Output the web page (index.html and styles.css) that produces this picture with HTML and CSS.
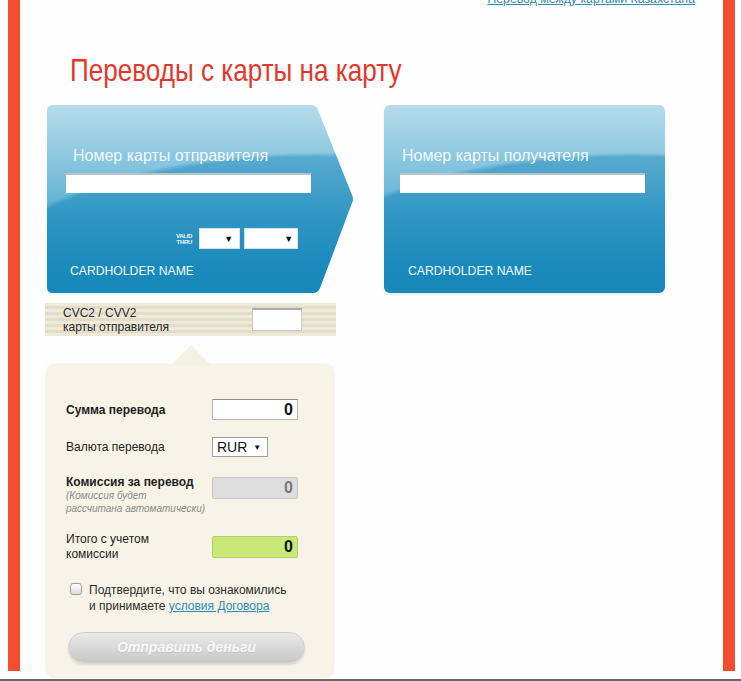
FILE: index.html
```html
<!DOCTYPE html>
<html lang="ru">
  <head>
    <meta charset="UTF-8" />
    <title>Переводы с карты на карту</title>
    <link rel="stylesheet" href="styles.css">
  </head>
  <body>
    <div class="frame">
      <div class="top-link">
        <a href="#">Перевод между картами Казахстана</a>
      </div>

      <h1 class="title">Переводы с карты на карту</h1>

      <div class="cards">
        <div class="card card-from">
          <div class="card-label">Номер карты отправителя</div>
          <div class="card-input"></div>
          <div class="valid-row">
            <div class="valid-text">VALID<br>THRU</div>
            <div class="mini-select month">▼</div>
            <div class="mini-select year">▼</div>
          </div>
          <div class="holder">CARDHOLDER NAME</div>
        </div>

        <div class="card card-to">
          <div class="card-label">Номер карты получателя</div>
          <div class="card-input"></div>
          <div class="holder">CARDHOLDER NAME</div>
        </div>
      </div>

      <div class="cvc">
        <div class="cvc-text">
          CVC2 / CVV2<br>
          карты отправителя
        </div>
        <div class="cvc-input"></div>
      </div>

      <div class="panel">
        <div class="row row-sum">
          <div class="label bold">Сумма перевода</div>
          <div class="field">0</div>
        </div>

        <div class="row row-currency">
          <div class="label">Валюта перевода</div>
          <div class="currency">RUR <span class="arrow">▼</span></div>
        </div>

        <div class="row row-fee">
          <div class="label">
            <span class="bold">Комиссия за перевод</span>
            <div class="note">(Комиссия будет<br>рассчитана автоматически)</div>
          </div>
          <div class="field field-fee">0</div>
        </div>

        <div class="row row-total">
          <div class="label">Итого с учетом<br>комиссии</div>
          <div class="field field-total">0</div>
        </div>

        <div class="agree">
          <span class="checkbox"></span>
          <div class="agree-text">
            Подтвердите, что вы ознакомились<br>
            и принимаете <a href="#">условия Договора</a>
          </div>
        </div>

        <div class="send-btn">Отправить деньги</div>
      </div>
    </div>
  </body>
</html>
```

FILE: styles.css
```css
* {
  margin: 0;
  padding: 0;
  box-sizing: border-box;
}

body {
  height: 681px;
  overflow: hidden;
  background-color: #fff;
  border-bottom: 2px solid #6a6a6a;
  font-family: "Liberation Sans", Arial, sans-serif;
  color: #222;
}

.frame {
  margin-left: 8px;
  width: 727px;
  height: 100%;
  border-left: 12px solid #f24d2d;
  border-right: 12px solid #f24d2d;
  padding: 0 28px 0 27px;
  background-color: #fefefe;
}

.top-link {
  text-align: right;
  font-size: 12.3px;
  line-height: 15px;
  margin-top: -8px;
}

.top-link a,
.agree-text a {
  color: #2f8ab6;
}

.title {
  display: block;
  width: 400px;
  margin: 45px 0 0 23px;
  font-weight: normal;
  font-size: 32px;
  line-height: 36px;
  color: #e2382a;
  white-space: nowrap;
  transform: scaleX(0.815);
  transform-origin: left center;
}

/* cards */

.cards {
  display: flex;
  gap: 30px;
  margin-top: 17px;
}

.card {
  height: 188px;
  display: flex;
  flex-direction: column;
  color: #f2f9fc;
  background:
    radial-gradient(ellipse 360px 150px at 88% 105%, rgba(18, 128, 182, 0.35) 97%, rgba(255, 255, 255, 0.12) 100%),
    linear-gradient(to bottom, #acd7e8 0%, #78bedb 30%, #3fa2cc 60%, #1f8fbf 85%, #1a8cbc 100%);
}

.card-from {
  width: 307px;
  padding-left: 19px;
  clip-path: path("M6,0 H264 Q269,0 271,5 L305,90 Q307,94 305,98 L273,183 Q271,188 266,188 H6 Q0,188 0,182 V6 Q0,0 6,0 Z");
}

.card-to {
  width: 281px;
  padding-left: 16px;
  border-radius: 6px;
  box-shadow: 0 2px 3px rgba(0, 0, 0, 0.08);
}

.card-label {
  margin-top: 41px;
  margin-left: 7px;
  font-size: 16px;
  line-height: 20px;
}

.card-to .card-label {
  margin-left: 2px;
}

.card-input {
  margin-top: 7px;
  width: 245px;
  height: 20px;
  background-color: #fff;
  border-top: 2px solid #b9c4c9;
}

.valid-row {
  display: flex;
  align-items: center;
  gap: 5px;
  margin-top: 35px;
  margin-left: 110px;
}

.valid-text {
  font-size: 6px;
  line-height: 6px;
  font-weight: bold;
  text-align: right;
  letter-spacing: -0.3px;
}

.mini-select {
  height: 21px;
  background-color: #fff;
  color: #111;
  font-size: 9px;
  line-height: 21px;
  text-align: right;
  border: 1px solid #d6e4ea;
}

.mini-select.month {
  width: 41px;
  margin-left: 2px;
  padding-right: 6px;
}

.mini-select.year {
  width: 54px;
  margin-left: -1px;
  padding-right: 4px;
}

.holder {
  margin-top: auto;
  margin-bottom: 14px;
  margin-left: 4px;
  font-size: 12.2px;
  line-height: 16px;
}

.card-to .holder {
  margin-left: 8px;
}

/* cvc strip */

.cvc {
  display: flex;
  align-items: center;
  width: 291px;
  height: 33px;
  margin: 10px 0 0 -2px;
  padding-left: 18px;
  background: repeating-linear-gradient(to bottom, #eeeadb 0 3px, #e3ddc7 3px 6px);
}

.cvc-text {
  font-size: 12px;
  line-height: 14px;
  color: #2a2a2a;
}

.cvc-input {
  width: 50px;
  height: 23px;
  margin-left: auto;
  margin-right: 34px;
  background-color: #fff;
  border: 1px solid #c9c9c9;
  border-top: 2px solid #a9a9a9;
}

/* form panel */

.panel {
  position: relative;
  width: 286px;
  height: 312px;
  margin-top: 29px;
  padding: 34px 0 0 19px;
  background-color: #f7f4e7;
  border-radius: 8px;
  box-shadow: 0 0 3px rgba(120, 110, 80, 0.25);
  font-size: 12px;
}

.panel::before {
  content: "";
  position: absolute;
  left: 123px;
  top: -20px;
  width: 42px;
  height: 21px;
  background-color: #f5f2e4;
  clip-path: polygon(50% 0, 100% 100%, 0 100%);
}

.row {
  display: flex;
  align-items: center;
}

.label {
  width: 146px;
  flex-shrink: 0;
  line-height: 14px;
}

.bold {
  font-weight: bold;
}

.field {
  width: 86px;
  height: 22px;
  padding-right: 4px;
  text-align: right;
  font-size: 16px;
  font-weight: bold;
  line-height: 20px;
  color: #111;
  background-color: #fff;
  border: 1px solid #b5b5b5;
  border-top-color: #8d8d8d;
}

.row-sum .field {
  height: 21px;
}

.row-currency {
  margin-top: 17px;
}

.currency {
  width: 56px;
  height: 20px;
  padding-left: 4px;
  font-size: 14px;
  line-height: 18px;
  color: #111;
  background-color: #fff;
  border: 1px solid #9d9d9d;
}

.currency .arrow {
  font-size: 8px;
  vertical-align: 2px;
  margin-left: 2px;
}

.row-fee,
.row-total {
  align-items: flex-start;
}

.row-fee {
  margin-top: 18px;
}

.note {
  font-size: 10px;
  line-height: 13px;
  font-style: italic;
  color: #8a8a8a;
  white-space: nowrap;
}

.field-fee {
  margin-top: 2px;
  color: #777;
  background-color: #dedede;
  border-color: #c4c4c4;
  border-radius: 2px;
}

.row-total {
  margin-top: 17px;
}

.row-total .label {
  line-height: 15px;
}

.field-total {
  margin-top: 4px;
  background-color: #c9e87a;
  border-color: #b3d066;
  border-radius: 2px;
}

.agree {
  display: flex;
  align-items: flex-start;
  gap: 7px;
  margin: 20px 0 0 4px;
}

.checkbox {
  width: 12px;
  height: 12px;
  margin-top: 1px;
  border: 1px solid #9c9c9c;
  border-radius: 3px;
  background: linear-gradient(to bottom, #fdfdfd, #dcdcdc);
}

.agree-text {
  line-height: 16px;
  color: #2a2a2a;
}

.send-btn {
  width: 237px;
  height: 31px;
  margin: 18px 0 0 2px;
  border-radius: 16px;
  border: 1px solid #cfcfcf;
  background: linear-gradient(to bottom, #e9e9e9 0%, #d9d9d9 50%, #c7c7c7 100%);
  box-shadow: 0 2px 2px rgba(0, 0, 0, 0.12);
  text-align: center;
  font-size: 14px;
  line-height: 29px;
  font-weight: bold;
  font-style: italic;
  color: #f7f7f7;
  text-shadow: 0 1px 1px rgba(0, 0, 0, 0.08);
}
```
